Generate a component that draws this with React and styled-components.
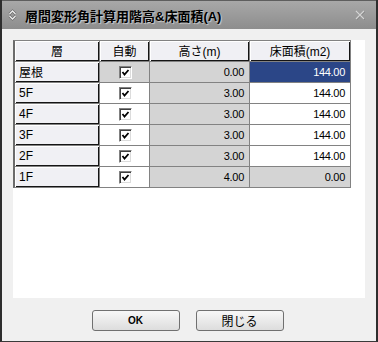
import React from "react";
import styled, { createGlobalStyle } from "styled-components";

const font = `"Liberation Sans", "Noto Sans CJK JP", sans-serif`;

const Global = createGlobalStyle`
  html, body { margin: 0; padding: 0; background: #f0f0f0; }
  * { box-sizing: border-box; }
`;

const Window = styled.div`
  width: 378px;
  height: 342px;
  display: flex;
  flex-direction: column;
  background: #f0f0f0;
  border-left: 2px solid #2e2e2e;
  border-right: 2px solid #2e2e2e;
  border-bottom: 1px solid #3a3a3a;
  font-family: ${font};
  color: #000;
`;

const TitleBar = styled.div`
  height: 29px;
  flex: none;
  display: flex;
  align-items: center;
  gap: 8px;
  padding: 0 11px 0 6px;
  background: linear-gradient(#a8a8a8, #8d8d8d);
  border-top: 1px solid #5e5e5e;
`;

const TitleText = styled.div`
  flex: 1;
  font-size: 13px;
  font-weight: 700;
  white-space: nowrap;
  text-shadow: 1px 1px 1px rgba(255, 255, 255, 0.55);
`;

const Body = styled.div`
  padding: 11px 11px 0 11px;
`;

const Panel = styled.div`
  height: 258px;
  background: #fff;
`;

const Grid = styled.div`
  display: grid;
  width: max-content;
  grid-template-columns: 84px 49px 99px 100px;
  grid-auto-rows: 20px;
  gap: 1px;
  background: #828282;
  border: 1px solid #828282;
  border-left: 2px solid #6b6b6b;
  font-size: 12px;
`;

const HeadCell = styled.div`
  display: flex;
  align-items: center;
  justify-content: ${(p) => (p.$left ? "flex-start" : "center")};
  padding: 0 4px 1px;
  background: #f0f0f4;
  box-shadow: inset 1px 1px 0 #ffffff, inset -1px -1px 0 #141414;
  white-space: nowrap;
`;

const tones = {
  white: { bg: "#ffffff", fg: "#000" },
  gray: { bg: "#d4d4d4", fg: "#000" },
  sel: { bg: "#2b4687", fg: "#fff" },
};

const NumCell = styled.div`
  display: flex;
  align-items: center;
  justify-content: flex-end;
  padding: 0 5px 0 0;
  font-size: 11px;
  letter-spacing: -0.3px;
  background: ${(p) => tones[p.$tone].bg};
  color: ${(p) => tones[p.$tone].fg};
`;

const CheckCell = styled.div`
  display: flex;
  align-items: center;
  justify-content: center;
  padding-left: 1px;
  background: ${(p) => tones[p.$tone].bg};
`;

const CheckBox = styled.span`
  width: 13px;
  height: 13px;
  display: flex;
  align-items: center;
  justify-content: center;
  background: #fff;
  border-top: 1px solid #808080;
  border-left: 1px solid #808080;
  border-right: 1px solid #ffffff;
  border-bottom: 1px solid #ffffff;
  box-shadow: inset 1px 1px 0 #404040, inset -1px -1px 0 #dcdcdc;
`;

const Footer = styled.div`
  display: flex;
  justify-content: center;
  gap: 16px;
  padding: 12px 3px 0 0;
`;

const Button = styled.button`
  width: 88px;
  height: 21px;
  padding: 0;
  border: 1px solid #707070;
  border-radius: 3px;
  background: linear-gradient(#f7f7f7, #dddddd);
  font-family: ${font};
  font-size: ${(p) => (p.$bold ? "10px" : "12px")};
  font-weight: ${(p) => (p.$bold ? 700 : 400)};
  color: #000;
`;

const UpDownIcon = () => (
  <svg width="9" height="12" viewBox="0 0 9 12">
    <path d="M1.5 5 L4.5 2 L7.5 5" stroke="#666" strokeWidth="2.6" fill="none" />
    <path d="M1.5 7 L4.5 10 L7.5 7" stroke="#666" strokeWidth="2.6" fill="none" />
    <path d="M1.5 5 L4.5 2 L7.5 5" stroke="#eeeeee" strokeWidth="1.3" fill="none" />
    <path d="M1.5 7 L4.5 10 L7.5 7" stroke="#eeeeee" strokeWidth="1.3" fill="none" />
  </svg>
);

const CloseIcon = () => (
  <svg width="10" height="10" viewBox="0 0 10 10">
    <path d="M1.5 1.5 L9.5 9.5 M9.5 1.5 L1.5 9.5" stroke="#7a7a7a" strokeWidth="1.4" />
    <path d="M1 1 L9 9 M9 1 L1 9" stroke="#d4d4d4" strokeWidth="1.3" />
  </svg>
);

const Check = () => (
  <svg width="9" height="9" viewBox="0 0 9 9">
    <polyline points="1.5,4 3.5,6.5 7.5,2" stroke="#000" strokeWidth="1.8" fill="none" />
  </svg>
);

const rows = [
  { name: "屋根", autoTone: "gray", h: "0.00", a: "144.00", aTone: "sel" },
  { name: "5F", autoTone: "white", h: "3.00", a: "144.00", aTone: "white" },
  { name: "4F", autoTone: "white", h: "3.00", a: "144.00", aTone: "white" },
  { name: "3F", autoTone: "white", h: "3.00", a: "144.00", aTone: "white" },
  { name: "2F", autoTone: "white", h: "3.00", a: "144.00", aTone: "white" },
  { name: "1F", autoTone: "white", h: "4.00", a: "0.00", aTone: "gray" },
];

export default function App() {
  return (
    <>
      <Global />
      <Window>
        <TitleBar>
          <UpDownIcon />
          <TitleText>層間変形角計算用階高&amp;床面積(A)</TitleText>
          <CloseIcon />
        </TitleBar>
        <Body>
          <Panel>
            <Grid>
              <HeadCell>層</HeadCell>
              <HeadCell>自動</HeadCell>
              <HeadCell>高さ(m)</HeadCell>
              <HeadCell>床面積(m2)</HeadCell>
              {rows.map((r) => (
                <React.Fragment key={r.name}>
                  <HeadCell $left>{r.name}</HeadCell>
                  <CheckCell $tone={r.autoTone}>
                    <CheckBox>
                      <Check />
                    </CheckBox>
                  </CheckCell>
                  <NumCell $tone="gray">{r.h}</NumCell>
                  <NumCell $tone={r.aTone}>{r.a}</NumCell>
                </React.Fragment>
              ))}
            </Grid>
          </Panel>
        </Body>
        <Footer>
          <Button $bold>OK</Button>
          <Button>閉じる</Button>
        </Footer>
      </Window>
    </>
  );
}
